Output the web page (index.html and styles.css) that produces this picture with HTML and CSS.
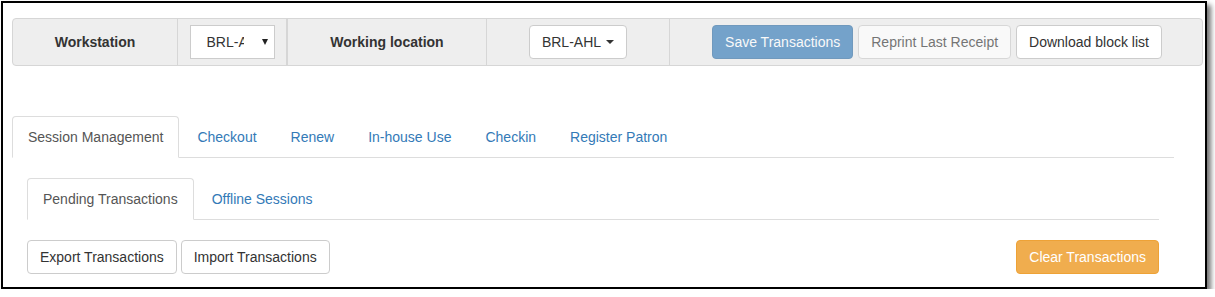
FILE: index.html
```html
<!DOCTYPE html>
<html>
<head>
<meta charset="utf-8">
<link rel="stylesheet" href="styles.css">
</head>
<body>
<div class="frame">
  <div class="toolbar">
    <div class="cell c1"><span class="label">Workstation</span></div>
    <div class="cell c2">
      <div class="select"><span class="val">BRL-AHL</span><span class="tri"></span></div>
    </div>
    <div class="cell c3"><span class="label">Working location</span></div>
    <div class="cell c4"><div class="btn btn-default">BRL-AHL <span class="caret"></span></div></div>
    <div class="cell c5">
      <div class="btn-group">
        <div class="btn btn-primary disabled">Save Transactions</div>
        <div class="btn btn-default disabled reprint">Reprint Last Receipt</div>
        <div class="btn btn-default">Download block list</div>
      </div>
    </div>
  </div>

  <div class="tabs-wrap">
    <ul class="nav-tabs">
      <li class="active"><a>Session Management</a></li>
      <li><a>Checkout</a></li>
      <li><a>Renew</a></li>
      <li><a>In-house Use</a></li>
      <li><a>Checkin</a></li>
      <li><a>Register Patron</a></li>
    </ul>
    <div class="tab-content">
      <ul class="nav-tabs">
        <li class="active"><a>Pending Transactions</a></li>
        <li><a>Offline Sessions</a></li>
      </ul>
      <div class="actions">
        <div class="left">
          <div class="btn btn-default">Export Transactions</div>
          <div class="btn btn-default">Import Transactions</div>
        </div>
        <div class="btn btn-warning">Clear Transactions</div>
      </div>
    </div>
  </div>
</div>
</body>
</html>
```

FILE: styles.css
```css
* { box-sizing: border-box; }
html, body { margin: 0; padding: 0; background: #fff; }
body {
  font-family: "Liberation Sans", Arial, sans-serif;
  font-size: 14px;
  line-height: 20px;
  color: #333;
}
.frame {
  margin: 1px 0 0 1px;
  width: 1206px;
  height: 288px;
  border: 2px solid #000;
  box-shadow: 4px 4px 5px rgba(0,0,0,0.55);
  overflow: hidden;
  background: #fff;
}
.toolbar {
  margin: 15px 0 0 9px;
  width: 1191px;
  height: 48px;
  background: #eee;
  border: 1px solid #d6d6d6;
  border-radius: 4px;
  display: flex;
}
.cell {
  display: flex;
  align-items: center;
  justify-content: center;
  border-right: 1px solid #d6d6d6;
}
.c1 { width: 165px; }
.c2 { width: 110px; border-right: 2px solid #d6d6d6; }
.c3 { width: 199px; }
.c4 { width: 183px; }
.c5 { flex: 1; border-right: none; padding-left: 2px; }
.label { font-weight: bold; color: #333; }
.select {
  width: 85px;
  height: 34px;
  background: #fff;
  border: 1px solid #ccc;
  display: flex;
  align-items: center;
  padding-left: 16px;
}
.val {
  width: 37px;
  overflow: hidden;
  white-space: nowrap;
  color: #333;
}
.tri {
  margin-left: 18px;
  width: 0; height: 0;
  border-left: 3.5px solid transparent;
  border-right: 3.5px solid transparent;
  border-top: 6px solid #222;
}
.btn {
  display: inline-flex;
  align-items: center;
  height: 34px;
  padding: 6px 12px;
  border: 1px solid #ccc;
  border-radius: 4px;
  background: #fff;
  color: #333;
  white-space: nowrap;
}
.caret {
  display: inline-block;
  width: 0; height: 0;
  margin-left: 5px;
  border-left: 4px solid transparent;
  border-right: 4px solid transparent;
  border-top: 4px solid #333;
}
.btn-group { display: flex; gap: 5px; }
.btn-primary { background: #337ab7; border-color: #2e6da4; color: #fff; }
.btn-primary.disabled { opacity: 0.65; }
.btn-default.disabled { opacity: 0.65; }
.btn-warning { background: #f0ad4e; border-color: #eea236; color: #fff; }

.tabs-wrap {
  margin: 50px 0 0 9px;
  width: 1162px;
}
.nav-tabs {
  list-style: none;
  margin: 0;
  padding: 0;
  display: flex;
  border-bottom: 1px solid #ddd;
}
.nav-tabs li { margin-right: 2px; margin-bottom: -1px; }
.nav-tabs a {
  display: block;
  padding: 10px 15px;
  border: 1px solid transparent;
  border-radius: 4px 4px 0 0;
  color: #337ab7;
}
.nav-tabs li.active a {
  color: #555;
  background: #fff;
  border-color: #ddd #ddd transparent #ddd;
}
.tab-content { padding: 20px 15px 0 15px; }
.actions {
  margin-top: 20px;
  display: flex;
  justify-content: space-between;
}
.left { display: flex; gap: 4px; }
```
